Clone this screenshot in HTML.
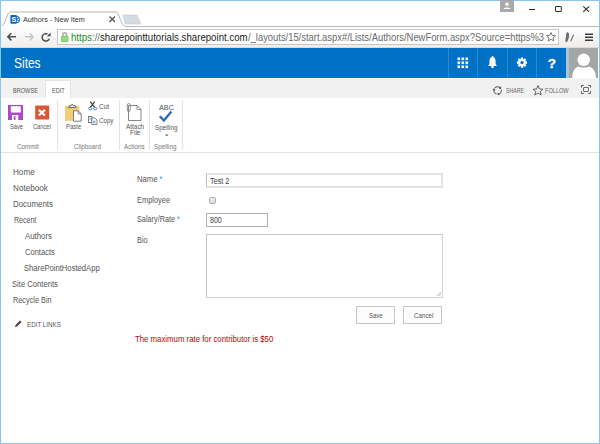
<!DOCTYPE html>
<html><head><meta charset="utf-8">
<style>
html,body{margin:0;padding:0;}
body{width:600px;height:444px;position:relative;overflow:hidden;background:#fff;font-family:"Liberation Sans",sans-serif;color:#444;}
.a{position:absolute;}
.t{position:absolute;white-space:nowrap;line-height:1;transform-origin:0 0;}
</style></head><body>
<!-- window borders -->
<div class="a" style="left:0;top:0;width:600px;height:1px;background:#86c6f0"></div>
<div class="a" style="left:0;top:0;width:1px;height:444px;background:#86c6f0"></div>
<div class="a" style="left:599px;top:0;width:1px;height:444px;background:#86c6f0"></div>
<div class="a" style="left:0;top:443px;width:600px;height:1px;background:#86c6f0"></div>

<!-- tab strip -->
<svg class="a" style="left:0;top:0" width="600" height="48">
  <defs>
    <linearGradient id="tb" x1="0" y1="0" x2="0" y2="1">
      <stop offset="0" stop-color="#ffffff"/><stop offset="1" stop-color="#ededed"/>
    </linearGradient>
  </defs>
  <rect x="1" y="26" width="598" height="22" fill="url(#tb)"/>
  <path d="M1 26.5 H599" stroke="#b9b9b9" stroke-width="1"/>
  <path d="M0.5 26.5 C3 26 4 24 5 21 L8 14 C8.6 12.6 9.5 12 11 12 L115 12 C116.5 12 117.4 12.6 118 14 L121 21 C122 24 123 26 126 26.5" fill="#fff" stroke="#b5b5b5" stroke-width="1"/>
  <rect x="1" y="26" width="124" height="2" fill="#fff"/>
  <path d="M123 15 L137 15 L141 24 L125 24 Z" fill="#d6dbe3" stroke="#c3c9d2" stroke-width="0.6"/>
  <!-- favicon -->
  <circle cx="16.4" cy="19.4" r="3.7" fill="#2f86d6"/>
  <circle cx="17.6" cy="17.6" r="0.7" fill="#fff"/><circle cx="18.4" cy="19.6" r="0.7" fill="#fff"/><circle cx="17.4" cy="21.4" r="0.7" fill="#fff"/>
  <rect x="10.4" y="15" width="6.4" height="8.8" rx="0.8" fill="#0b63c1"/>
  <text x="11.4" y="22.2" font-family="Liberation Sans" font-weight="bold" font-size="7.2" fill="#fff">S</text>
  <!-- close x -->
  <path d="M109.5 16.5 L115 22 M115 16.5 L109.5 22" stroke="#555" stroke-width="1.3"/>
  <!-- window controls -->
  <rect x="500" y="0" width="14" height="12" fill="#a9a9a9"/>
  <circle cx="507" cy="4.3" r="1.8" fill="#fff"/>
  <path d="M503.5 9 C503.5 7 510.5 7 510.5 9 Z" fill="#fff"/>
  <path d="M529.2 9.5 H535" stroke="#222" stroke-width="1"/>
  <rect x="555.5" y="6.5" width="5.8" height="5" rx="0.4" fill="none" stroke="#2a2a2a" stroke-width="1"/>
  <path d="M583.3 6.3 L589.1 11.9 M589.1 6.3 L583.3 11.9" stroke="#2a2a2a" stroke-width="1.05"/>
  <!-- nav buttons -->
  <path d="M8 36.8 H16 M11.4 33.2 L7.8 36.8 L11.4 40.4" stroke="#505050" stroke-width="1.6" fill="none"/>
  <path d="M25 36.8 H33 M29.6 33.2 L33.2 36.8 L29.6 40.4" stroke="#c4c4c4" stroke-width="1.4" fill="none"/>
  <path d="M49.3 38.7 A3.7 3.7 0 1 1 47.4 34" stroke="#4a4a4a" stroke-width="1.5" fill="none"/>
  <path d="M46.8 36.3 L50.6 32.4 L50.6 36.3 Z" fill="#4a4a4a"/>
  <!-- address box -->
  <rect x="57.5" y="29.5" width="501" height="15" fill="#fff" stroke="#c6c6c6" stroke-width="1"/>
  <!-- lock -->
  <path d="M62.9 36.5 V34.6 A1.8 1.8 0 0 1 66.5 34.6 V36.5" stroke="#a9a9a9" stroke-width="1.4" fill="none"/>
  <rect x="61.6" y="36.2" width="6.4" height="5.4" rx="0.6" fill="#97de7c" stroke="#62b94c" stroke-width="0.8"/>
  <!-- star -->
  <path d="M551 32.5 L552.3 35.5 L555.5 35.7 L553 37.8 L553.8 41 L551 39.3 L548.2 41 L549 37.8 L546.5 35.7 L549.7 35.5 Z" fill="none" stroke="#555" stroke-width="0.8"/>
  <!-- extension -->
  <path d="M567.4 32.2 C569.2 32.4 569.4 35.2 568.8 37.6 C568.2 40.2 567.2 42.6 566.1 42.2 C565 41.8 565.4 39.2 565.9 37.2 C566.3 35.5 565.9 32.1 567.4 32.2 Z" fill="#6b6b6b"/>
  <path d="M573.6 34.8 L570.7 41.3" stroke="#6b6b6b" stroke-width="1.1"/>
  <!-- menu -->
  <path d="M585 34.2 H593 M585 37.2 H593 M585 40.2 H593" stroke="#3c3c3c" stroke-width="1.4"/>
  <path d="M1 47.5 H599" stroke="#e4d8cf" stroke-width="1"/>
</svg>

<!-- suite bar -->
<div class="a" style="left:1px;top:48px;width:565px;height:30px;background:#0072c6"></div>
<div class="a" style="left:448px;top:48px;width:1px;height:30px;background:#2a88d0"></div>
<div class="a" style="left:477px;top:48px;width:1px;height:30px;background:#2a88d0"></div>
<div class="a" style="left:507px;top:48px;width:1px;height:30px;background:#2a88d0"></div>
<div class="a" style="left:536px;top:48px;width:1px;height:30px;background:#2a88d0"></div>
<div class="a" style="left:566px;top:48px;width:3px;height:30px;background:#a9c6d8"></div>
<div class="a" style="left:569px;top:48px;width:29px;height:30px;background:#a6a6a6;overflow:hidden">
  <svg width="29" height="30"><circle cx="14.7" cy="11.8" r="6.2" fill="#fff"/><path d="M3.2 30 C3.2 23 6 19.5 9.5 18.6 C11.5 20.2 18 20.2 20 18.6 C23.5 19.5 27 23 27 30 Z" fill="#fff"/></svg>
</div>
<svg class="a" style="left:440px;top:48px" width="130" height="29">
  <g fill="#fff">
    <rect x="17.5" y="9.5" width="2.6" height="2.6"/><rect x="21.5" y="9.5" width="2.6" height="2.6"/><rect x="25.5" y="9.5" width="2.6" height="2.6"/>
    <rect x="17.5" y="13.5" width="2.6" height="2.6"/><rect x="21.5" y="13.5" width="2.6" height="2.6"/><rect x="25.5" y="13.5" width="2.6" height="2.6"/>
    <rect x="17.5" y="17.5" width="2.6" height="2.6"/><rect x="21.5" y="17.5" width="2.6" height="2.6"/><rect x="25.5" y="17.5" width="2.6" height="2.6"/>
  </g>
  <path d="M48 18 C49.5 17 49.5 15 49.5 13 C49.5 10.5 50.5 9 52.5 9 C54.5 9 55.5 10.5 55.5 13 C55.5 15 55.5 17 57 18 Z" fill="#fff"/>
  <circle cx="52.5" cy="19" r="1.3" fill="#fff"/>
  <circle cx="52.5" cy="8.7" r="0.8" fill="#fff"/>
  <g transform="translate(82,14.6)">
    <path d="M3.38 -1.24 L5.07 -1.13 L5.07 1.13 L3.38 1.24 L3.27 1.51 L4.39 2.79 L2.79 4.39 L1.51 3.27 L1.24 3.38 L1.13 5.07 L-1.13 5.07 L-1.24 3.38 L-1.51 3.27 L-2.79 4.39 L-4.39 2.79 L-3.27 1.51 L-3.38 1.24 L-5.07 1.13 L-5.07 -1.13 L-3.38 -1.24 L-3.27 -1.51 L-4.39 -2.79 L-2.79 -4.39 L-1.51 -3.27 L-1.24 -3.38 L-1.13 -5.07 L1.13 -5.07 L1.24 -3.38 L1.51 -3.27 L2.79 -4.39 L4.39 -2.79 L3.27 -1.51 Z M1.7 0 A1.7 1.7 0 1 0 -1.7 0 A1.7 1.7 0 1 0 1.7 0 Z" fill="#fff" fill-rule="evenodd"/>
  </g>
  <text x="107.8" y="19.8" font-family="Liberation Sans" font-weight="bold" font-size="13.5" fill="#fff" stroke="#fff" stroke-width="0.35">?</text>
</svg>

<!-- ribbon tabs -->
<div class="a" style="left:1px;top:78px;width:598px;height:1px;background:#fdfdf6"></div>
<div class="a" style="left:1px;top:79px;width:598px;height:19px;background:#f1f1f1"></div>
<div class="a" style="left:45px;top:80px;width:26px;height:18px;background:#fff;border:1px solid #e3e3e3;border-bottom:none;box-sizing:border-box"></div>
<!-- share follow -->
<svg class="a" style="left:490px;top:84px" width="110" height="14">
  <path d="M4.98 3.88 A3.7 3.7 0 0 1 10.22 3.88 M11.17 5.54 A3.7 3.7 0 0 1 8.56 10.07 M6.64 10.07 A3.7 3.7 0 0 1 4.03 5.54" fill="none" stroke="#5a5a5a" stroke-width="1.1"/><circle cx="10.22" cy="3.88" r="1.1" fill="#555"/><circle cx="8.56" cy="10.07" r="1.1" fill="#555"/><circle cx="4.03" cy="5.54" r="1.1" fill="#555"/>
  <path d="M48 1.5 L49.5 5 L53 5.2 L50.3 7.5 L51.2 11 L48 9 L44.8 11 L45.7 7.5 L43 5.2 L46.5 5 Z" fill="none" stroke="#555" stroke-width="0.9"/>
  <path d="M91.5 3.8 V1.5 H93.8 M98.2 1.5 H100.5 V3.8 M100.5 7.2 V9.5 H98.2 M93.8 9.5 H91.5 V7.2" fill="none" stroke="#5e5e5e" stroke-width="1"/>
  <rect x="93.5" y="3.5" width="5" height="4" rx="0.5" fill="none" stroke="#6a6a6a" stroke-width="1"/>
</svg>

<!-- ribbon body -->
<div class="a" style="left:1px;top:152px;width:598px;height:1px;background:#e4e4e4"></div>
<div class="a" style="left:57px;top:100px;width:1px;height:50px;background:#e4e4e4"></div>
<div class="a" style="left:119px;top:100px;width:1px;height:50px;background:#e4e4e4"></div>
<div class="a" style="left:149px;top:100px;width:1px;height:50px;background:#e4e4e4"></div>
<div class="a" style="left:182px;top:100px;width:1px;height:50px;background:#e4e4e4"></div>
<svg class="a" style="left:0;top:98px" width="200" height="54">
  <!-- save -->
  <rect x="8" y="7" width="15" height="15" fill="#a94ac6"/>
  <rect x="10.8" y="8.2" width="10" height="6.3" fill="#fff"/>
  <rect x="12" y="17" width="6.3" height="5" fill="#fff"/>
  <rect x="13.8" y="18.2" width="1.7" height="3.8" fill="#a94ac6"/>
  <!-- cancel -->
  <rect x="35.2" y="7.6" width="14" height="14" rx="1" fill="#da5634"/>
  <path d="M38.8 11.9 L44.9 17.5 M44.9 11.9 L38.8 17.5" stroke="#fff" stroke-width="2.3"/>
  <!-- paste -->
  <rect x="65" y="8" width="14.3" height="14.8" fill="#f2cd78"/>
  <path d="M68.6 9.6 H75.8 L75 7.6 H73.3 L72.2 6.1 L71.1 7.6 H69.4 Z" fill="#dfe6ee" stroke="#6b6b6b" stroke-width="1"/>
  <path d="M73.5 12.8 H78.2 L81.2 15.8 V23.2 H73.5 Z" fill="#fff" stroke="#6e6e6e" stroke-width="0.9"/>
  <path d="M78.2 12.8 V15.8 H81.2" fill="none" stroke="#6e6e6e" stroke-width="0.8"/>
  <!-- cut -->
  <path d="M90.2 3.6 L94.7 9.4 M94.8 3.6 L90.3 9.4" stroke="#3a3a3a" stroke-width="1.1"/>
  <ellipse cx="90.2" cy="10.6" rx="1.7" ry="1.15" fill="none" stroke="#3f7fca" stroke-width="0.9"/>
  <ellipse cx="95.2" cy="10.6" rx="1.7" ry="1.15" fill="none" stroke="#3f7fca" stroke-width="0.9"/>
  <!-- copy -->
  <rect x="88.4" y="18.4" width="3.6" height="6.2" fill="#eef3f9" stroke="#666" stroke-width="0.8"/>
  <path d="M89.4 20 H90.8 M89.4 21.6 H90.8" stroke="#5c95d6" stroke-width="0.7"/>
  <path d="M91.8 20 H95 L97 22 V26.5 H91.8 Z" fill="#fff" stroke="#666" stroke-width="0.8"/>
  <rect x="92.9" y="22.6" width="2.6" height="2.6" fill="#8cb5e2"/>
  <!-- attach -->
  <path d="M128.5 7.5 H137 L141 11.5 V22.5 H128.5 Z" fill="#fff" stroke="#777" stroke-width="0.9"/>
  <path d="M137 7.5 V11.5 H141" fill="none" stroke="#777" stroke-width="0.8"/>
  <rect x="127.3" y="5.5" width="3" height="8" rx="1.5" fill="none" stroke="#888" stroke-width="0.9"/>
  <!-- spelling check -->
  <path d="M159.8 18.2 L163.9 22.6 L171.4 13.4" fill="none" stroke="#2b6cb5" stroke-width="2.3"/>
  <path d="M165 36.5 H168.5 L166.75 38.2 Z" fill="#555"/>
</svg>

<!-- left nav -->
<svg class="a" style="left:14px;top:320px" width="8" height="8"><path d="M1 7 L1.5 5 L6 0.5 L7.5 2 L3 6.5 Z" fill="#444"/></svg>

<!-- form -->
<div class="a" style="left:206px;top:173px;width:237px;height:15px;border:2px solid #e2e2e2;border-left:1px solid #bdbdbd;box-sizing:border-box;background:#fff"></div>
<div class="a" style="left:209px;top:197px;width:7px;height:7px;border:1px solid #acacac;border-radius:1.5px;box-sizing:border-box;background:linear-gradient(#eeeeee,#dddddd)"></div>
<div class="a" style="left:206px;top:213px;width:62px;height:14px;border:1px solid #b2b2b2;box-sizing:border-box;background:#fff"></div>
<div class="a" style="left:206px;top:234px;width:237px;height:64px;border:1px solid #c4c4c4;border-right-color:#d2d2d2;border-bottom-color:#d2d2d2;box-sizing:border-box;background:#fff"></div>
<svg class="a" style="left:436px;top:291px" width="6" height="6"><path d="M5 1 L1 5 M5 3 L3 5" stroke="#999" stroke-width="0.7"/></svg>
<div class="a" style="left:356px;top:306px;width:39px;height:18px;border:1px solid #c6c6c6;box-sizing:border-box;background:#fdfdfd"></div>
<div class="a" style="left:403px;top:306px;width:39px;height:18px;border:1px solid #c6c6c6;box-sizing:border-box;background:#fdfdfd"></div>
<!--TEXT-->
<div class="t" id="tab" style="left:22.50px;top:15.77px;font-size:7.6px;color:#333;transform:scaleX(0.9500);">Authors - New Item</div>
<div class="t" id="url" style="left:71.00px;top:32.73px;font-size:10px;color:#707070;transform:scaleX(0.9657);"><span style="color:#2a8a2a">https</span>://<span style="color:#1a1a1a">sharepointtutorials.sharepoint.com</span></div>
<div class="t" id="url2" style="left:248.00px;top:32.73px;font-size:10px;color:#6a6a6a;transform:scaleX(0.9387);">/_layouts/15/start.aspx#/Lists/Authors/NewForm.aspx?Source=https%3</div>
<div class="t" id="sites" style="left:13.50px;top:56.35px;font-size:14px;color:#fff;transform:scaleX(0.8540);">Sites</div>
<div class="t" id="browse" style="left:13.00px;top:87.27px;font-size:7px;color:#555;transform:scaleX(0.7990);">BROWSE</div>
<div class="t" id="edit" style="left:52.00px;top:87.27px;font-size:7px;color:#555;transform:scaleX(0.7914);">EDIT</div>
<div class="t" id="share" style="left:505.50px;top:87.27px;font-size:7px;color:#666;transform:scaleX(0.7505);">SHARE</div>
<div class="t" id="follow" style="left:545.00px;top:87.27px;font-size:7px;color:#666;transform:scaleX(0.8000);">FOLLOW</div>
<div class="t" id="abc" style="left:159.00px;top:104.27px;font-size:7px;color:#555;transform:scaleX(1.0438);">ABC</div>
<div class="t" id="save" style="left:10.00px;top:123.27px;font-size:7px;color:#555;transform:scaleX(0.8174);">Save</div>
<div class="t" id="cancel" style="left:32.50px;top:123.27px;font-size:7px;color:#555;transform:scaleX(0.8135);">Cancel</div>
<div class="t" id="paste" style="left:65.50px;top:123.27px;font-size:7px;color:#555;transform:scaleX(0.8508);">Paste</div>
<div class="t" id="cut" style="left:99.00px;top:103.27px;font-size:7px;color:#555;transform:scaleX(0.9298);">Cut</div>
<div class="t" id="copy" style="left:99.00px;top:117.27px;font-size:7px;color:#555;transform:scaleX(0.8826);">Copy</div>
<div class="t" id="attach" style="left:126.00px;top:123.27px;font-size:7px;color:#555;transform:scaleX(0.9136);">Attach</div>
<div class="t" id="file" style="left:130.00px;top:129.27px;font-size:7px;color:#555;transform:scaleX(0.9304);">File</div>
<div class="t" id="spellb" style="left:155.00px;top:124.27px;font-size:7px;color:#555;transform:scaleX(0.9000);">Spelling</div>
<div class="t" id="commit" style="left:17.00px;top:143.27px;font-size:7px;color:#777;transform:scaleX(0.9000);">Commit</div>
<div class="t" id="clip" style="left:74.00px;top:143.27px;font-size:7px;color:#777;transform:scaleX(0.9000);">Clipboard</div>
<div class="t" id="actions" style="left:124.00px;top:143.27px;font-size:7px;color:#777;transform:scaleX(0.8937);">Actions</div>
<div class="t" id="spelll" style="left:154.00px;top:143.27px;font-size:7px;color:#777;transform:scaleX(0.9000);">Spelling</div>
<div class="t" id="home" style="left:12.50px;top:168.00px;font-size:8.5px;color:#555;transform:scaleX(0.9556);">Home</div>
<div class="t" id="notebook" style="left:12.50px;top:184.00px;font-size:8.5px;color:#555;transform:scaleX(0.9589);">Notebook</div>
<div class="t" id="docs" style="left:12.50px;top:200.00px;font-size:8.5px;color:#555;transform:scaleX(0.9292);">Documents</div>
<div class="t" id="recent" style="left:13.50px;top:216.00px;font-size:8.5px;color:#555;transform:scaleX(0.8279);">Recent</div>
<div class="t" id="authors" style="left:25.00px;top:232.00px;font-size:8.5px;color:#555;transform:scaleX(0.9214);">Authors</div>
<div class="t" id="contacts" style="left:25.00px;top:248.00px;font-size:8.5px;color:#555;transform:scaleX(0.8896);">Contacts</div>
<div class="t" id="spha" style="left:24.00px;top:264.00px;font-size:8.5px;color:#555;transform:scaleX(0.9000);">SharePointHostedApp</div>
<div class="t" id="sitec" style="left:12.00px;top:280.00px;font-size:8.5px;color:#555;transform:scaleX(0.9000);">Site Contents</div>
<div class="t" id="recycle" style="left:13.00px;top:296.00px;font-size:8.5px;color:#555;transform:scaleX(0.8603);">Recycle Bin</div>
<div class="t" id="editl" style="left:26.50px;top:321.27px;font-size:7px;color:#555;transform:scaleX(0.8907);">EDIT LINKS</div>
<div class="t" id="name" style="left:136.50px;top:175.00px;font-size:8.5px;color:#555;transform:scaleX(0.9000);">Name <span style="color:#4f8fd0">*</span></div>
<div class="t" id="emp" style="left:136.50px;top:196.00px;font-size:8.5px;color:#555;transform:scaleX(0.8750);">Employee</div>
<div class="t" id="salary" style="left:136.50px;top:215.00px;font-size:8.5px;color:#555;transform:scaleX(0.8575);">Salary/Rate <span style="color:#4f8fd0">*</span></div>
<div class="t" id="bio" style="left:137.00px;top:236.00px;font-size:8.5px;color:#555;transform:scaleX(0.8686);">Bio</div>
<div class="t" id="test2" style="left:210.00px;top:177.00px;font-size:8.5px;color:#444;transform:scaleX(0.8550);">Test 2</div>
<div class="t" id="v800" style="left:210.00px;top:216.00px;font-size:8.5px;color:#444;transform:scaleX(0.8308);">800</div>
<div class="t" id="bsave" style="left:368.50px;top:312.27px;font-size:7px;color:#555;transform:scaleX(0.8551);">Save</div>
<div class="t" id="bcancel" style="left:413.50px;top:312.27px;font-size:7px;color:#555;transform:scaleX(0.8935);">Cancel</div>
<div class="t" id="err" style="left:134.50px;top:335.00px;font-size:8.5px;color:#c00000;transform:scaleX(0.9174);">The maximum rate for contributor is $50</div>
<!--/TEXT-->
</body></html>
